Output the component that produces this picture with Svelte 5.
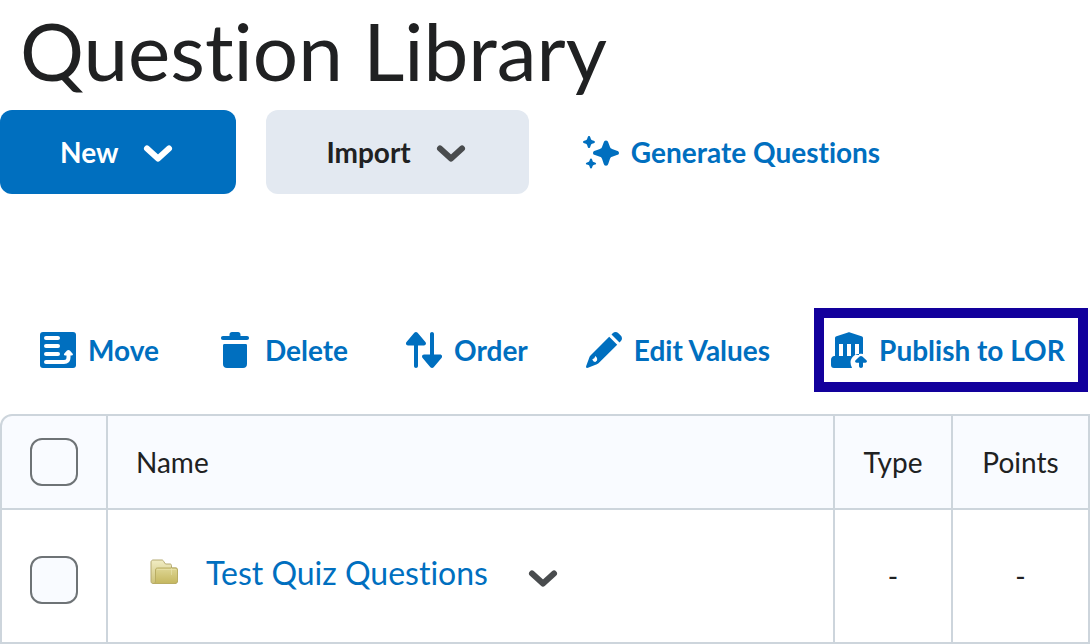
<script>
	let questions = $state([{ id: 1, name: 'Test Quiz Questions', type: '-', points: '-', selected: false }]);

	let allSelected = $derived(questions.every((q) => q.selected));

	function toggleAll(e) {
		const checked = e.currentTarget.checked;
		questions.forEach((q) => (q.selected = checked));
	}
</script>

{#snippet chevron()}
	<svg class="icon chevron" viewBox="0 0 36 36" aria-hidden="true">
		<path d="M7 14.500 L18 24.500 L29 14.500" />
	</svg>
{/snippet}

<main>
	<h1>Question Library</h1>

	<div class="actions">
		<button class="btn primary">New {@render chevron()}</button>
		<button class="btn secondary">Import {@render chevron()}</button>
		<button class="btn subtle">
			<svg class="icon" viewBox="0 -2 36 36" aria-hidden="true">
				<path
					d="M23 4.500c1.300 0 1.900.8 2.300 2l1.600 4.300c.4 1.200 1 1.800 2.200 2.200l4.800 1.700c1.200.4 2.100 1 2.100 2.200s-.9 1.800-2.100 2.200l-4.800 1.700c-1.200.4-1.800 1-2.200 2.200l-1.600 4.700c-.4 1.200-1 2-2.300 2s-1.900-.8-2.300-2l-1.600-4.700c-.4-1.200-1-1.800-2.200-2.200L12 19.100c-1.200-.4-2-1-2-2.200s.8-1.800 2-2.200l4.900-1.700c1.200-.4 1.800-1 2.200-2.200l1.600-4.300c.4-1.200 1-2 2.300-2z"
				/>
				<path
					d="M6 0c.7 0 1 .5 1.200 1.100l.7 1.900c.2.700.6 1 1.200 1.200l1.700.6c.6.200 1.100.5 1.100 1.200s-.5 1-1.100 1.200l-1.700.6c-.7.200-1 .6-1.200 1.200l-.7 1.900C7 11.500 6.700 12 6 12s-1-.5-1.200-1.100L4.100 9c-.2-.7-.6-1-1.200-1.200l-1.700-.6C.6 7 0 6.700 0 6s.6-1 1.200-1.200l1.700-.6c.7-.2 1-.6 1.200-1.200l.7-1.900C5 .5 5.300 0 6 0z"
				/>
				<path
					d="M8 22.500c.6 0 .9.400 1.100 1l.5 1.400c.2.600.4.800 1 1l1.400.5c.6.200 1.100.5 1.100 1.100s-.5.900-1.100 1.100l-1.400.5c-.6.200-.8.500-1 1l-.5 1.400c-.2.600-.5 1-1.100 1s-.9-.4-1.100-1l-.5-1.400c-.2-.6-.5-.8-1-1L4 28.600c-.6-.2-1.100-.5-1.100-1.100s.5-.9 1.100-1.100l1.400-.5c.6-.2.800-.5 1-1l.5-1.400c.2-.6.500-1 1.100-1z"
				/>
			</svg>
			Generate Questions
		</button>
	</div>

	<div class="toolbar">
		<button class="tool">
			<svg class="icon" viewBox="0 0 36 36" aria-hidden="true">
				<rect width="36" height="36" rx="3" />
				<g class="cut">
					<path d="M6 6H18M6 14H18M6 22H18" />
					<path d="M6 30H24c3 0 4.500-1.500 4.500-4.500v-3" />
				</g>
				<path class="cut-fill" d="M27 18.500c.8-.8 2-.8 2.800 0l2.700 3c.8 1 .3 2-.8 2h-6.600c-1.100 0-1.600-1-.8-2z" />
			</svg>
			Move
		</button>
		<button class="tool">
			<svg class="icon" viewBox="0 0 36 36" aria-hidden="true">
				<path
					d="M6 4h6.500V2.500C12.500 1 13.500 0 15 0h6c1.500 0 2.500 1 2.500 2.500V4H30c1.300 0 2 .9 2 2s-.7 2-2 2H6c-1.300 0-2-.9-2-2s.7-2 2-2z"
				/>
				<path d="M6 13.500c0-1 .5-1.500 1.500-1.500h21c1 0 1.500.5 1.500 1.500V32c0 2.500-1.500 4-4 4H10c-2.500 0-4-1.500-4-4z" />
			</svg>
			Delete
		</button>
		<button class="tool">
			<svg class="icon" viewBox="0 0 36 36" aria-hidden="true">
				<path
					d="M8.300.8c.8-1 2.500-1 3.300 0l7.800 9.300c1.200 1.500.4 3.400-1.500 3.400H12V34c0 1.200-.9 2-2 2s-2-.8-2-2V13.500H2c-1.900 0-2.700-1.900-1.500-3.400z"
				/>
				<path
					d="M27.700 35.200c-.8 1-2.500 1-3.300 0l-7.800-9.300c-1.200-1.500-.4-3.400 1.500-3.400H24V2c0-1.200.9-2 2-2s2 .8 2 2v20.500h6c1.900 0 2.700 1.900 1.500 3.400z"
				/>
			</svg>
			Order
		</button>
		<button class="tool">
			<svg class="icon" viewBox="0 0 36 36" aria-hidden="true">
				<path d="M25.500 2.500l1.200-1.200c1.700-1.700 4-1.700 5.700 0l2.300 2.300c1.700 1.700 1.700 4 0 5.700l-1.200 1.200z" />
				<path
					fill-rule="evenodd"
					d="M23.200 4.800l8 8L12.500 31.200c-.5.500-1 .8-1.600 1L2 35.800C.7 36.300-.3 35.300.2 34l3.300-8.900c.2-.6.500-1.100 1-1.600zM9.300 24l-1 2.300-2 1c.5 1.700 1.500 2.400 3 2.700l1.700-1.500c.5-2-.2-3.500-1.700-4.500z"
				/>
			</svg>
			Edit Values
		</button>
		<button class="tool highlighted">
			<svg class="icon" viewBox="0 0 36 36" aria-hidden="true">
				<path
					fill-rule="evenodd"
					d="M17 .4c.7-.3 1.400-.3 2 0l11.500 3.800c1 .4 1.500 1 1.500 2V22c-6-1.500-12 2-12.500 8 0 2 .5 4 1.500 6H3c-2 0-3-1-3-3v-5c0-2 1-3.500 3-4h1V6.200c0-1 .5-1.600 1.500-2zM8 12v12h4V12zM16 12v12h4V12zM24 12v11h4V12z"
				/>
				<path
					d="M28.600 24.500c.8-.7 2-.7 2.800 0l4 3.700c1 1 .5 2.500-1 2.500H32V34c0 1.200-.8 2-2 2s-2-.8-2-2v-3.300h-2.400c-1.500 0-2-1.500-1-2.500z"
				/>
			</svg>
			Publish to LOR
		</button>
	</div>

	<table>
		<thead>
			<tr>
				<th class="check">
					<input type="checkbox" aria-label="Select all" checked={allSelected} onchange={toggleAll} />
				</th>
				<th class="name">Name</th>
				<th class="type">Type</th>
				<th class="points">Points</th>
			</tr>
		</thead>
		<tbody>
			{#each questions as question (question.id)}
				<tr>
					<td class="check">
						<input type="checkbox" aria-label="Select {question.name}" bind:checked={question.selected} />
					</td>
					<td class="name">
						<div class="item">
							<svg class="folder" viewBox="0 0 28 26" aria-hidden="true">
								<defs>
									<linearGradient id="back" x1="0" y1="0" x2="0" y2="1">
										<stop offset="0" stop-color="#f1edc4" />
										<stop offset="1" stop-color="#cdc278" />
									</linearGradient>
									<linearGradient id="front" x1="0" y1="0" x2="0" y2="1">
										<stop offset="0" stop-color="#ded694" />
										<stop offset="1" stop-color="#c5b75f" />
									</linearGradient>
								</defs>
								<path
									d="M1 3c0-1 1-2 2-2h9c1 0 1.500 1 2 2l1.500 2H20c1 0 1.500.7 1.500 1.500V9H26c1 0 1.500.7 1.500 1.500V22c0 1.500-1 2.500-2.500 2.500H3c-1.300 0-2-.9-2-2z"
									fill="url(#back)"
									stroke="#b5aa72"
								/>
								<path
									d="M5.500 11c0-1.200.8-2 2-2H25c1.500 0 2.500.8 2.500 2v10.500c0 2-1 3-3 3H3.500c1.500 0 2-1 2-2.500z"
									fill="url(#front)"
									stroke="#b9ad64"
								/>
								<path d="M7 10.500H26M21.500 9v7" fill="none" stroke="#eee9b8" opacity="0.500" />
							</svg>
							<a href="#question-{question.id}">{question.name}</a>
							<button class="menu" aria-label="Actions for {question.name}">{@render chevron()}</button>
						</div>
					</td>
					<td class="type">{question.type}</td>
					<td class="points">{question.points}</td>
				</tr>
			{/each}
		</tbody>
	</table>
</main>

<style>
	:global(body) {
		margin: 0;
		background: #fff;
	}

	main {
		font-family: Lato, 'Liberation Sans', sans-serif;
		font-size: 28px;
		font-variant-ligatures: none;
		color: #202122;
	}

	h1 {
		margin: 0;
		padding: 2px 20px 12px;
		font-size: 80px;
		font-weight: 400;
		line-height: 96px;
	}

	button {
		display: flex;
		align-items: center;
		margin: 0;
		border: 0;
		background: none;
		font: inherit;
		font-variant-ligatures: none;
		font-weight: 700;
		white-space: nowrap;
		cursor: pointer;
	}

	.icon {
		flex: none;
		width: 36px;
		height: 36px;
		fill: currentColor;
	}

	.chevron {
		fill: none;
		stroke: currentColor;
		stroke-width: 6;
		stroke-linecap: round;
		stroke-linejoin: round;
	}

	.cut {
		fill: none;
		stroke: #fff;
		stroke-width: 4;
		stroke-linecap: round;
	}

	.cut-fill {
		fill: #fff;
	}

	.actions {
		display: flex;
		gap: 30px;
	}

	.btn {
		gap: 22px;
		height: 84px;
		padding: 0 60px;
		border-radius: 12px;
	}

	.primary {
		background: #006fbf;
		color: #fff;
	}

	.secondary {
		background: #e3e9f1;
		color: #202122;
	}

	.secondary .chevron,
	.menu .chevron {
		color: #494c4e;
	}

	.subtle {
		gap: 12px;
		padding: 0 24px;
		color: #006fbf;
	}

	.toolbar {
		display: flex;
		margin-top: 114px;
		padding-left: 11px;
	}

	.tool {
		gap: 12px;
		height: 84px;
		padding: 0 29px;
		color: #006fbf;
	}

	.highlighted {
		margin-left: 15px;
		padding: 0 13px 0 7px;
		border: 10px solid #12009c;
	}

	table {
		width: 100%;
		margin-top: 22px;
		border-spacing: 0;
		table-layout: fixed;
	}

	th,
	td {
		box-sizing: border-box;
		padding: 0;
		border-right: 2px solid #cdd5dc;
		border-bottom: 2px solid #cdd5dc;
		font-weight: 400;
		text-align: center;
	}

	th {
		height: 96px;
		border-top: 2px solid #cdd5dc;
		background: #f9fbff;
	}

	td {
		height: 134px;
	}

	.check {
		width: 108px;
		border-left: 2px solid #cdd5dc;
	}

	th.check {
		border-top-left-radius: 12px;
	}

	td.check {
		padding-top: 8px;
	}

	.name {
		padding-left: 28px;
		text-align: left;
	}

	.type {
		width: 118px;
	}

	.points {
		width: 137px;
	}

	input {
		appearance: none;
		display: block;
		box-sizing: border-box;
		width: 48px;
		height: 48px;
		margin: 0 auto;
		border: 2px solid #6e7376;
		border-radius: 12px;
		background: #f9fbff;
	}

	input:checked {
		background: #006fbf;
	}

	.item {
		display: flex;
		align-items: center;
		padding: 0 14px 8px;
	}

	.folder {
		width: 28px;
		height: 26px;
		margin-right: 28px;
	}

	.item a {
		color: #006fbf;
		font-size: 32px;
		text-decoration: none;
	}

	.item a:hover {
		text-decoration: underline;
	}

	.menu {
		margin-left: 37px;
		padding: 10px 0 0;
	}
</style>
